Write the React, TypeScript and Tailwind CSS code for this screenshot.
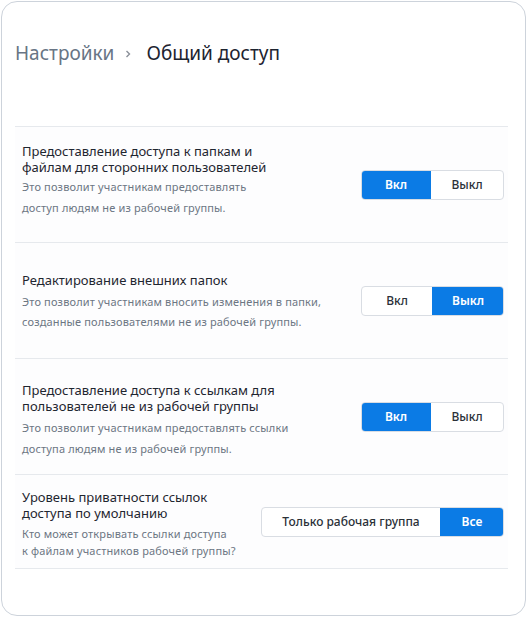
import { useState } from "react";

type Option = { value: string; label: string; width: string };

type Setting = {
  id: string;
  title: string;
  description: string;
  options: Option[];
  initial: string;
  rowClass: string;
  textClass: string;
  descClass: string;
};

const onOff: Option[] = [
  { value: "on", label: "Вкл", width: "w-[70px]" },
  { value: "off", label: "Выкл", width: "w-[72px]" },
];

const settings: Setting[] = [
  {
    id: "folders",
    title: "Предоставление доступа к папкам и\nфайлам для сторонних пользователей",
    description: "Это позволит участникам предоставлять\nдоступ людям не из рабочей группы.",
    options: onOff,
    initial: "on",
    rowClass: "h-[116px]",
    textClass: "pt-[16px]",
    descClass: "mt-[1px] leading-[21px]",
  },
  {
    id: "edit",
    title: "Редактирование внешних папок",
    description: "Это позволит участникам вносить изменения в папки,\nсозданные пользователями не из рабочей группы.",
    options: onOff,
    initial: "off",
    rowClass: "h-[116px]",
    textClass: "pt-[29px]",
    descClass: "mt-[4px] leading-[20px]",
  },
  {
    id: "links",
    title: "Предоставление доступа к ссылкам для\nпользователей не из рабочей группы",
    description: "Это позволит участникам предоставлять ссылки\nдоступа людям не из рабочей группы.",
    options: onOff,
    initial: "on",
    rowClass: "h-[116px]",
    textClass: "pt-[23px]",
    descClass: "mt-[3px] leading-[21px]",
  },
  {
    id: "privacy",
    title: "Уровень приватности ссылок\nдоступа по умолчанию",
    description: "Кто может открывать ссылки доступа\nк файлам участников рабочей группы?",
    options: [
      { value: "team", label: "Только рабочая группа", width: "w-[178px]" },
      { value: "all", label: "Все", width: "w-[64px]" },
    ],
    initial: "all",
    rowClass: "h-[94px]",
    textClass: "pt-[14px]",
    descClass: "mt-[4px] leading-[17px]",
  },
];

function Segmented({ options, value, onChange }: { options: Option[]; value: string; onChange: (v: string) => void }) {
  return (
    <div className="flex h-[30px] shrink-0 self-center overflow-hidden rounded-[4px] border border-[#d9dde3] bg-white">
      {options.map((option) => {
        const active = option.value === value;
        return (
          <button
            key={option.value}
            type="button"
            onClick={() => onChange(option.value)}
            className={
              active
                ? `${option.width} -my-px bg-[#0b7be5] text-[12px] font-semibold text-white first:-ml-px last:-mr-px`
                : `${option.width} text-[12px] font-medium text-[#2a3038]`
            }
          >
            {option.label}
          </button>
        );
      })}
    </div>
  );
}

export default function App() {
  const [values, setValues] = useState<Record<string, string>>(
    Object.fromEntries(settings.map((s) => [s.id, s.initial])),
  );

  return (
    <div className="h-[617px] w-[527px] bg-white p-px font-['Noto_Sans',sans-serif]">
      <div className="h-full rounded-[16px] border border-[#cdd3db] bg-white">
        <div className="flex h-[124px] items-start px-[13px] pt-[37px] text-[19px]">
          <span className="text-[#687585]">Настройки</span>
          <svg width="10" height="10" viewBox="0 0 10 10" className="mt-[10px] mr-[13px] ml-[9px]">
            <path d="M3.5 2 L6.5 5 L3.5 8" fill="none" stroke="#8a9099" strokeWidth="1.4" />
          </svg>
          <span className="text-[#1d2430]">Общий доступ</span>
        </div>
        <div className="mr-[17px] ml-[13px] border-t border-[#e6e9ed]">
          {settings.map((setting) => (
            <div
              key={setting.id}
              className={`${setting.rowClass} flex justify-between border-b border-[#e6e9ed] bg-[#fdfdfe] pr-[4px] pl-[7px]`}
            >
              <div className={setting.textClass}>
                <p className="text-[13px] leading-[16px] whitespace-pre-line text-[#1f2630]">{setting.title}</p>
                <p className={`${setting.descClass} text-[11px] tracking-[0.15px] whitespace-pre-line text-[#6c7683]`}>
                  {setting.description}
                </p>
              </div>
              <Segmented
                options={setting.options}
                value={values[setting.id]}
                onChange={(v) => setValues((prev) => ({ ...prev, [setting.id]: v }))}
              />
            </div>
          ))}
        </div>
      </div>
    </div>
  );
}
